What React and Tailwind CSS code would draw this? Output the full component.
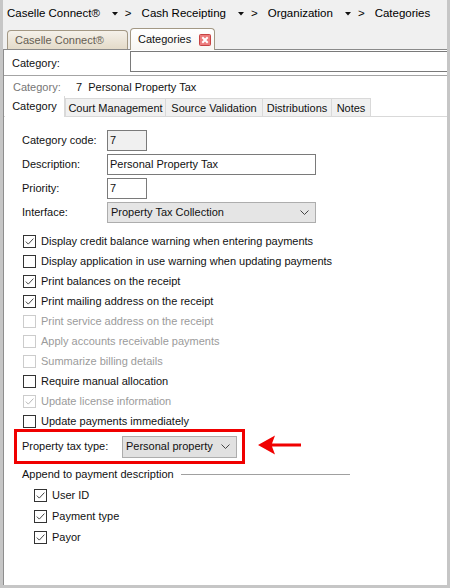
import React from 'react';

const Tri = () => (
  <svg width="6" height="4" viewBox="0 0 6 4" className="ml-[12px] shrink-0">
    <path d="M0 0 H6 L3 3.5 Z" fill="#111" />
  </svg>
);

const Crumb = ({ label, last }) => (
  <>
    <span>{label}</span>
    {!last && (
      <>
        <Tri />
        <span className="ml-[7px]">&gt;</span>
        <span className="w-[10px]" />
      </>
    )}
  </>
);

const Chevron = () => (
  <svg width="9" height="5" viewBox="0 0 9 5" className="shrink-0">
    <path d="M0.5 0.5 L4.5 4.5 L8.5 0.5" fill="none" stroke="#444" strokeWidth="1" />
  </svg>
);

const Box = ({ checked, disabled }) => (
  <span
    className={
      disabled
        ? 'w-[13px] h-[13px] border border-[#cccccc] bg-white shrink-0 flex'
        : 'w-[13px] h-[13px] border border-[#333333] bg-white shrink-0 flex'
    }
  >
    {checked && (
      <svg width="11" height="11" viewBox="0 0 11 11">
        <path
          d="M1.8 5.6 L4.3 8.1 L9.4 2.6"
          fill="none"
          stroke={disabled ? '#b8b8b8' : '#444'}
          strokeWidth="1"
        />
      </svg>
    )}
  </span>
);

const options = [
  { label: 'Display credit balance warning when entering payments', checked: true },
  { label: 'Display application in use warning when updating payments' },
  { label: 'Print balances on the receipt', checked: true },
  { label: 'Print mailing address on the receipt', checked: true },
  { label: 'Print service address on the receipt', disabled: true },
  { label: 'Apply accounts receivable payments', disabled: true },
  { label: 'Summarize billing details', disabled: true },
  { label: 'Require manual allocation' },
  { label: 'Update license information', checked: true, disabled: true },
  { label: 'Update payments immediately' },
];

const tabs = [
  { name: 'Court Management', w: 'w-[100px]' },
  { name: 'Source Validation', w: 'w-[97px]' },
  { name: 'Distributions', w: 'w-[69px]' },
  { name: 'Notes', w: 'w-[40px] border-r' },
];

export default function App() {
  return (
    <div className="w-[450px] h-[588px] flex flex-col bg-[#f0f0f0] border-l-[3px] border-r-[3px] border-b-[3px] border-[#c6c6c6] text-[11px] text-[#111] font-['Liberation_Sans',Arial,sans-serif] overflow-hidden">
      {/* breadcrumb */}
      <div className="h-[28px] flex items-center pl-[4px] text-[11.5px] text-black shrink-0">
        <Crumb label="Caselle Connect®" />
        <Crumb label="Cash Receipting" />
        <Crumb label="Organization" />
        <Crumb label="Categories" last />
      </div>

      {/* window tabs */}
      <div className="h-[21px] flex items-end pl-[4px] shrink-0">
        <div className="w-[121px] h-[19px] rounded-t-[4px] border border-b-0 border-[#a39884] bg-gradient-to-b from-[#f5f1ea] to-[#e4dbc9] text-[#655d52] flex items-center pl-[7px]">
          Caselle Connect®
        </div>
        <div className="relative z-10 -mb-[1px] ml-[2px] w-[85px] h-[22px] rounded-t-[4px] border border-b-0 border-[#a39884] bg-gradient-to-b from-white to-[#f8f6f2] flex items-center pl-[7px] gap-[8px]">
          <span>Categories</span>
          <svg width="12" height="12" viewBox="0 0 12 12" className="shrink-0">
            <rect x="0.5" y="0.5" width="11" height="11" rx="1" fill="#ec7c7c" stroke="#c74444" />
            <path d="M3.3 3.3 L8.7 8.7 M8.7 3.3 L3.3 8.7" stroke="#fff" strokeWidth="2" />
          </svg>
        </div>
      </div>

      {/* panel */}
      <div className="flex-1 flex flex-col bg-white border-t border-l border-t-[#8a8a8a] border-l-[#8e8e8e]">
        <div className="h-[26px] flex items-start border-b border-[#a4a4a4] shrink-0">
          <span className="w-[126px] pl-[8px] h-[26px] flex items-center">Category:</span>
          <div className="flex-1 mt-[1px] h-[21px] border border-r-0 border-[#7a7a7a] bg-white" />
        </div>

        <div className="h-[21px] flex items-center pl-[9px] pt-[1px] shrink-0">
          <span className="w-[63px] text-[#767676]">Category:</span>
          <span>7&nbsp; Personal Property Tax</span>
        </div>

        <div className="h-[20px] flex items-end border-b border-[#d9d9d9] pl-[1px] shrink-0">
          <div className="relative z-10 -mb-[1px] w-[60px] h-[21px] bg-white border-r border-[#d9d9d9] flex items-center justify-center">
            Category
          </div>
          {tabs.map((t) => (
            <div
              key={t.name}
              className={`${t.w} h-[18px] pt-[1px] bg-[#f0f0f0] border-l border-t border-[#d9d9d9] flex items-center justify-center`}
            >
              {t.name}
            </div>
          ))}
        </div>

        <div className="flex flex-col pt-[13px] pl-[18px]">
          <div className="flex flex-col gap-[3px]">
            <div className="flex items-center h-[21px]">
              <span className="w-[85px]">Category code:</span>
              <div className="w-[40px] h-[21px] border border-[#7a7a7a] bg-[#f0f0f0] flex items-center pl-[2px]">7</div>
            </div>
            <div className="flex items-center h-[21px]">
              <span className="w-[85px]">Description:</span>
              <div className="w-[209px] h-[21px] border border-[#7a7a7a] bg-white flex items-center pl-[2px]">
                Personal Property Tax
              </div>
            </div>
            <div className="flex items-center h-[21px]">
              <span className="w-[85px]">Priority:</span>
              <div className="w-[40px] h-[21px] border border-[#7a7a7a] bg-white flex items-center pl-[2px]">7</div>
            </div>
            <div className="flex items-center h-[21px]">
              <span className="w-[85px]">Interface:</span>
              <div className="w-[209px] h-[21px] border border-[#adadad] bg-[#e5e5e5] flex items-center justify-between pl-[3px] pr-[6px]">
                <span>Property Tax Collection</span>
                <Chevron />
              </div>
            </div>
          </div>

          <div className="flex flex-col mt-[8px] ml-[1px]">
            {options.map((o) => (
              <div key={o.label} className="h-[20px] flex items-center gap-[5px]">
                <Box checked={o.checked} disabled={o.disabled} />
                <span className={o.disabled ? 'text-[#9b9b9b]' : ''}>{o.label}</span>
              </div>
            ))}
          </div>

          <div className="flex items-center -mt-[2px] -ml-[8px]">
            <div className="w-[231px] h-[35px] border-[3px] border-[#f00000] flex items-center pl-[5px]">
              <span className="w-[100px]">Property tax type:</span>
              <div className="w-[115px] h-[22px] border border-[#adadad] bg-[#e1e1e1] flex items-center justify-between pl-[3px] pr-[6px]">
                <span>Personal property</span>
                <Chevron />
              </div>
            </div>
            <svg width="44" height="22" viewBox="0 0 44 22" className="ml-[13px] -mt-[3px] shrink-0">
              <path d="M0 11 L17 1.5 L14 9.5 H43 V12.5 H14 L17 20.5 Z" fill="#f00000" />
            </svg>
          </div>

          <div className="h-[14px] mt-[3px] flex items-center gap-[7px]">
            <span>Append to payment description</span>
            <span className="w-[169px] h-px bg-[#a0a0a0]" />
          </div>

          <div className="flex flex-col mt-[4px] ml-[12px]">
            {['User ID', 'Payment type', 'Payor'].map((l) => (
              <div key={l} className="h-[21px] flex items-center gap-[5px]">
                <Box checked />
                <span>{l}</span>
              </div>
            ))}
          </div>
        </div>
      </div>
    </div>
  );
}
